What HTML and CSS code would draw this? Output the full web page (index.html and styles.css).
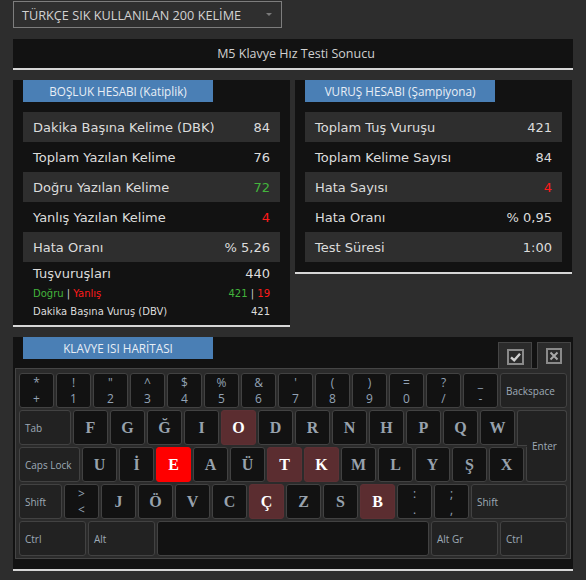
FILE: index.html
```html
<!DOCTYPE html>
<html lang="tr">
<head>
<meta charset="utf-8">
<title>M5 Klavye Hız Testi Sonucu</title>
<link rel="stylesheet" href="styles.css">
</head>
<body>
<div class="page">
  <div class="select">
    <span class="select-text">TÜRKÇE SIK KULLANILAN 200 KELİME</span>
    <span class="select-arrow"></span>
  </div>

  <div class="title-bar">M5 Klavye Hız Testi Sonucu</div>

  <div class="panels">
    <section class="panel">
      <div class="panel-head">BOŞLUK HESABI (Katiplik)</div>
      <div class="rows">
        <div class="row alt"><span>Dakika Başına Kelime (DBK)</span><span>84</span></div>
        <div class="row"><span>Toplam Yazılan Kelime</span><span>76</span></div>
        <div class="row alt"><span>Doğru Yazılan Kelime</span><span class="green">72</span></div>
        <div class="row"><span>Yanlış Yazılan Kelime</span><span class="red">4</span></div>
        <div class="row alt"><span>Hata Oranı</span><span>% 5,26</span></div>
      </div>
      <div class="extras">
        <div class="extra-main"><span>Tuşvuruşları</span><span>440</span></div>
        <div class="extra-sub"><span><span class="green">Doğru</span> | <span class="red">Yanlış</span></span><span><span class="green">421</span> | <span class="red">19</span></span></div>
        <div class="extra-dbv"><span>Dakika Başına Vuruş (DBV)</span><span>421</span></div>
      </div>
    </section>

    <section class="panel panel-right">
      <div class="panel-head">VURUŞ HESABI (Şampiyona)</div>
      <div class="rows">
        <div class="row alt"><span>Toplam Tuş Vuruşu</span><span>421</span></div>
        <div class="row"><span>Toplam Kelime Sayısı</span><span>84</span></div>
        <div class="row alt"><span>Hata Sayısı</span><span class="red">4</span></div>
        <div class="row"><span>Hata Oranı</span><span>% 0,95</span></div>
        <div class="row alt"><span>Test Süresi</span><span>1:00</span></div>
      </div>
    </section>
  </div>

  <section class="panel kb-panel">
    <div class="kb-head">
      <div class="panel-head">KLAVYE ISI HARİTASI</div>
      <div class="kb-tools">
        <div class="tool">
          <svg width="17" height="16" viewBox="0 0 17 16"><rect x="1" y="1" width="15" height="14" fill="none" stroke="#8a8a8a" stroke-width="2"/><path d="M4 8.3 L7.2 11.2 L13 4.8" fill="none" stroke="#cfcfcf" stroke-width="2.4"/></svg>
        </div>
        <div class="tool active">
          <svg width="16" height="16" viewBox="0 0 16 16"><rect x="1" y="1" width="14" height="14" fill="none" stroke="#8a8a8a" stroke-width="2"/><path d="M4.5 4.5 L11.5 11.5 M11.5 4.5 L4.5 11.5" fill="none" stroke="#a8a8a8" stroke-width="2"/></svg>
        </div>
      </div>
    </div>

    <div class="keyboard">
      <div class="krow">
        <div class="key sym"><span>*</span><span>+</span></div>
        <div class="key sym"><span>!</span><span>1</span></div>
        <div class="key sym"><span>"</span><span>2</span></div>
        <div class="key sym"><span>^</span><span>3</span></div>
        <div class="key sym"><span>$</span><span>4</span></div>
        <div class="key sym"><span>%</span><span>5</span></div>
        <div class="key sym"><span>&amp;</span><span>6</span></div>
        <div class="key sym"><span>'</span><span>7</span></div>
        <div class="key sym"><span>(</span><span>8</span></div>
        <div class="key sym"><span>)</span><span>9</span></div>
        <div class="key sym"><span>=</span><span>0</span></div>
        <div class="key sym"><span>?</span><span>/</span></div>
        <div class="key sym"><span>_</span><span>-</span></div>
        <div class="key fn grow">Backspace</div>
      </div>
      <div class="krow">
        <div class="key fn w-tab">Tab</div>
        <div class="key">F</div>
        <div class="key">G</div>
        <div class="key">Ğ</div>
        <div class="key">I</div>
        <div class="key heat">O</div>
        <div class="key">D</div>
        <div class="key">R</div>
        <div class="key">N</div>
        <div class="key">H</div>
        <div class="key">P</div>
        <div class="key">Q</div>
        <div class="key">W</div>
        <div class="key fn grow enter-top"></div>
      </div>
      <div class="krow">
        <div class="key fn w-caps">Caps Lock</div>
        <div class="key">U</div>
        <div class="key">İ</div>
        <div class="key hot">E</div>
        <div class="key">A</div>
        <div class="key">Ü</div>
        <div class="key heat">T</div>
        <div class="key heat">K</div>
        <div class="key">M</div>
        <div class="key">L</div>
        <div class="key">Y</div>
        <div class="key">Ş</div>
        <div class="key">X</div>
        <div class="key fn grow enter-bottom"><span class="enter-label">Enter</span></div>
      </div>
      <div class="krow">
        <div class="key fn w-shift">Shift</div>
        <div class="key sym"><span>&gt;</span><span>&lt;</span></div>
        <div class="key">J</div>
        <div class="key">Ö</div>
        <div class="key">V</div>
        <div class="key">C</div>
        <div class="key heat">Ç</div>
        <div class="key">Z</div>
        <div class="key">S</div>
        <div class="key heat">B</div>
        <div class="key sym"><span>:</span><span>.</span></div>
        <div class="key sym"><span>;</span><span>,</span></div>
        <div class="key fn grow">Shift</div>
      </div>
      <div class="krow">
        <div class="key fn w-mod">Ctrl</div>
        <div class="key fn w-mod">Alt</div>
        <div class="key space grow"></div>
        <div class="key fn w-mod">Alt Gr</div>
        <div class="key fn w-mod">Ctrl</div>
      </div>
    </div>
  </section>
</div>
</body>
</html>
```

FILE: styles.css
```css
html, body {
  margin: 0;
  padding: 0;
  background: #2d2d2d;
}

.page {
  width: 560px;
  padding: 1px 13px 0;
  font-family: "DejaVu Sans", sans-serif;
  color: #dcdcdc;
}

/* dropdown */
.select {
  box-sizing: border-box;
  width: 269px;
  height: 27px;
  border: 1px solid #7d7d7d;
  background: #2f2f2f;
  display: flex;
  align-items: center;
  justify-content: space-between;
  padding: 0 9px 0 8px;
}
.select-text {
  font: 12.7px "Open Sans", sans-serif;
  color: #d2d2d2;
}
.select-arrow {
  width: 0;
  height: 0;
  border-left: 3px solid transparent;
  border-right: 3px solid transparent;
  border-top: 3px solid #7a7a7a;
}

/* title */
.title-bar {
  margin-top: 11px;
  height: 29px;
  background: #121212;
  border-bottom: 2px solid #d6d6d6;
  display: flex;
  align-items: center;
  justify-content: center;
  padding-left: 6px;
  font: 12.5px "Open Sans", sans-serif;
  color: #d0d0d0;
}

/* stat panels */
.panels {
  margin-top: 10px;
  display: flex;
  gap: 5px;
  align-items: flex-start;
}
.panel {
  background: #121212;
  border-bottom: 2px solid #d6d6d6;
}
.panels .panel {
  width: 277px;
}
.panel-right {
  padding-bottom: 10px;
}
.panel-head {
  width: 190px;
  height: 22px;
  margin-left: 10px;
  background: #4a7fb5;
  color: #e8eef5;
  font: 11.7px "Open Sans", sans-serif;
  display: flex;
  align-items: center;
  justify-content: center;
}
.rows {
  margin: 10px 10px 0;
}
.row {
  height: 30px;
  padding: 0 10px;
  display: flex;
  align-items: center;
  justify-content: space-between;
  font-size: 13px;
  color: #dcdcdc;
}
.row.alt {
  background: #2e2e2e;
}
.green { color: #43b43c; }
.red { color: #ff1a1a; }

.extras {
  padding: 1px 20px 6px;
}
.extra-main, .extra-sub, .extra-dbv {
  display: flex;
  justify-content: space-between;
  align-items: center;
}
.extra-main {
  height: 20px;
  font-size: 13px;
}
.extra-sub {
  height: 20px;
  font-size: 10px;
  color: #cfcfcf;
}
.extra-dbv {
  height: 16px;
  font-size: 10px;
  color: #dcdcdc;
}

/* keyboard panel */
.kb-panel {
  margin-top: 10px;
  padding-bottom: 10px;
}
.kb-head {
  display: flex;
  justify-content: space-between;
  align-items: flex-start;
  padding-right: 2px;
  height: 31px;
}
.kb-tools {
  margin-top: 5px;
  display: flex;
  gap: 5px;
}
.tool {
  box-sizing: border-box;
  width: 34px;
  height: 26px;
  background: #2b2b2b;
  border: 1px solid #454545;
  border-bottom: none;
  display: flex;
  align-items: center;
  justify-content: center;
  padding-top: 2px;
}
.tool.active {
  position: relative;
  z-index: 1;
  height: 27px;
  padding-top: 0;
  padding-bottom: 1px;
}

.keyboard {
  margin: 0 2px;
  border: 1px solid #454545;
  background: #2b2b2b;
  padding: 4px 3px 2px 3px;
  display: flex;
  flex-direction: column;
  gap: 2px;
}
.krow {
  display: flex;
  gap: 2px;
  height: 35px;
}
.key {
  box-sizing: border-box;
  flex: none;
  width: 35px;
  height: 35px;
  border: 1px solid #424242;
  border-radius: 3px;
  background: #121212;
  display: flex;
  align-items: center;
  justify-content: center;
  color: #98a2ad;
  font: bold 16px "Liberation Serif", serif;
}
.key.sym {
  flex-direction: column;
  justify-content: flex-start;
  padding-top: 1px;
  font: 12px/16px "Open Sans", sans-serif;
  color: #93a3b5;
}
.key.fn {
  background: #222222;
  justify-content: flex-start;
  padding-left: 5px;
  font: 10px "Open Sans", sans-serif;
  color: #9eaab6;
}
.key.heat {
  background: #5b2d30;
  border-color: #5e3034;
  color: #ffffff;
}
.key.hot {
  background: #ff0000;
  border-color: #ff0000;
  color: #ffffff;
}
.key.space {
  background: #121212;
}
.grow { flex: 1 1 auto; width: auto; }
.w-tab { width: 52px; }
.w-caps { width: 61px; }
.w-shift { width: 43px; }
.w-mod { width: 67px; }

.enter-top {
  position: relative;
  height: 37px;
  border-bottom: none;
  border-radius: 3px 3px 0 0;
}
.enter-top::after {
  content: "";
  position: absolute;
  left: -1px;
  top: 34px;
  width: 10px;
  height: 2px;
  border-top: 1px solid #424242;
  background: #2b2b2b;
}
.enter-bottom {
  position: relative;
  z-index: 1;
  border-top: none;
  border-radius: 0 0 3px 3px;
  align-items: flex-start;
  justify-content: center;
  padding-left: 0;
}
.enter-label {
  line-height: 12px;
  margin-top: -7px;
}
```
